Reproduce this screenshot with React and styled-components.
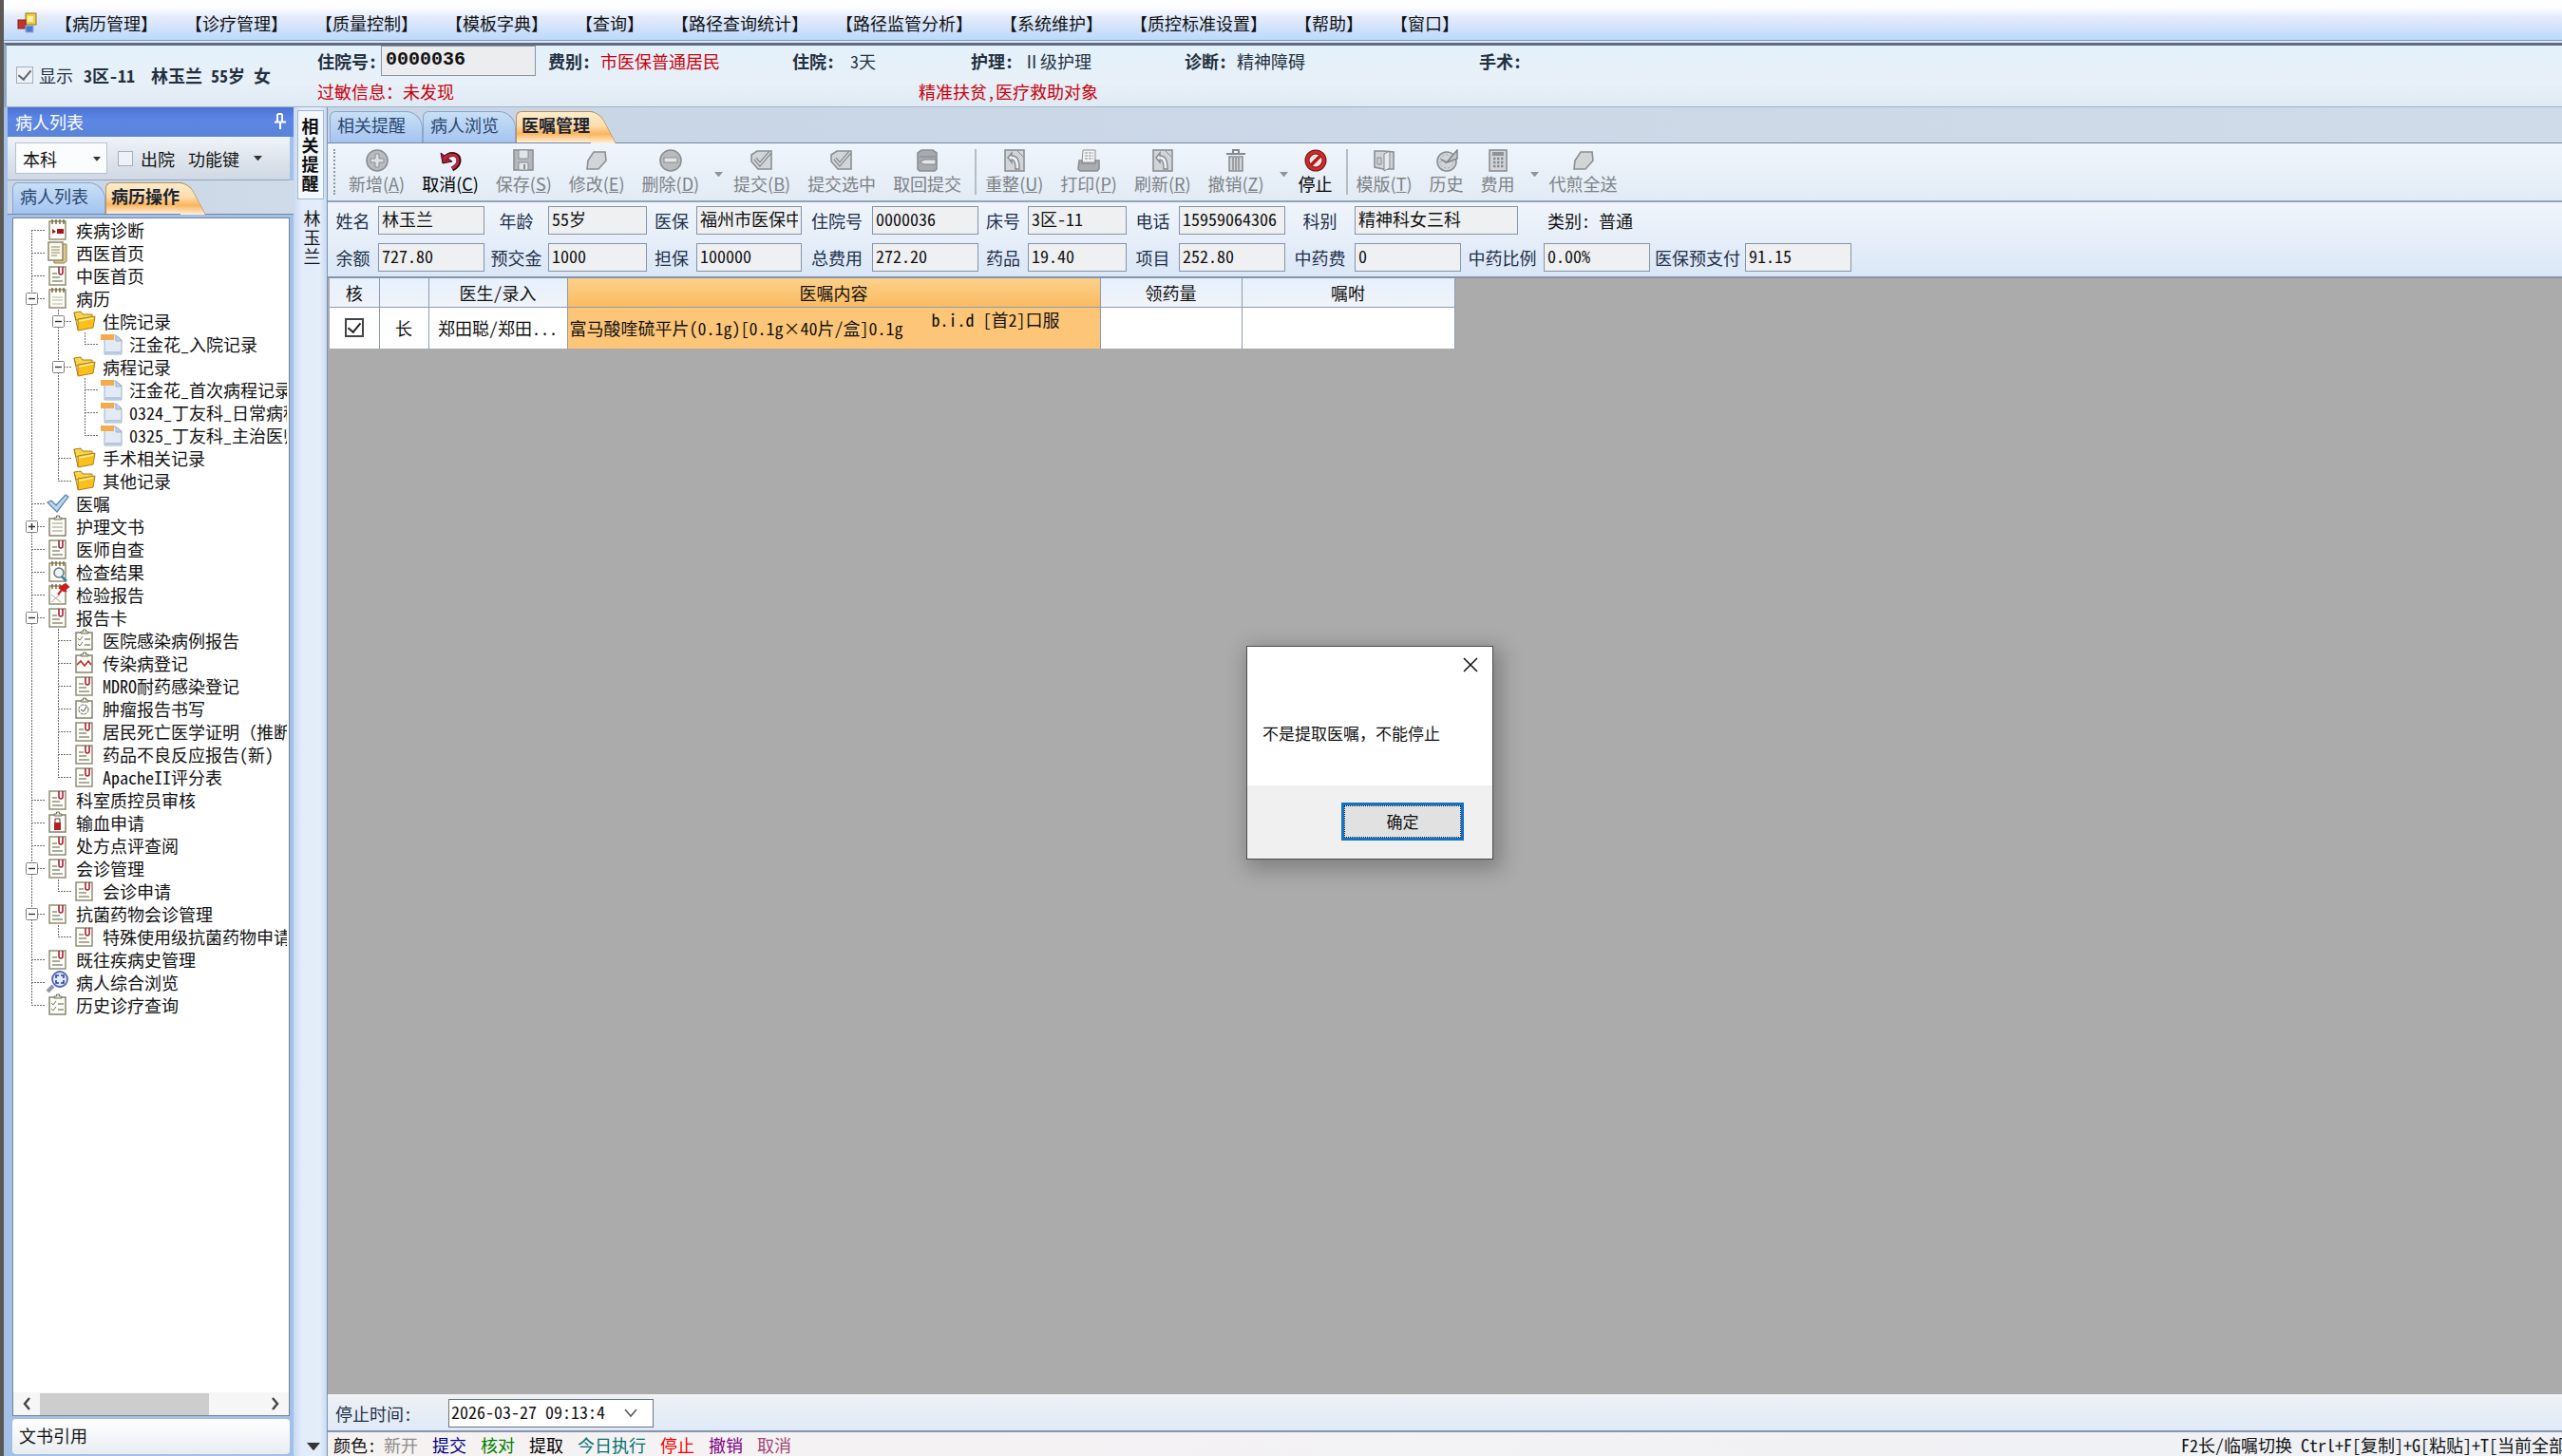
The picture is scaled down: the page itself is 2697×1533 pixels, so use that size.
import React, { useState } from 'react'
import styled, { createGlobalStyle, css } from 'styled-components'

const menus = ['病历管理', '诊疗管理', '质量控制', '模板字典', '查询', '路径查询统计', '路径监管分析', '系统维护', '质控标准设置', '帮助', '窗口']

const patientInfo = [
  { label: '费别', value: '市医保普通居民', width: 257, alert: true },
  { label: '住院', value: '3天', width: 188, gap: 16 },
  { label: '护理', value: 'Ⅱ级护理', width: 225 },
  { label: '诊断', value: '精神障碍', width: 310 },
  { label: '手术', value: '', width: 120 },
]

// guides: one letter per level
// f first, t middle, l last, | pass through, - expanded, + collapsed
const treeRows = [
  ['f', 'diagnose', '疾病诊断'],
  ['t', 'pages', '西医首页'],
  ['t', 'clip', '中医首页'],
  ['-', 'notebook', '病历'],
  ['|-', 'folder', '住院记录'],
  ['||l', 'doc', '汪金花_入院记录'],
  ['|-', 'folder', '病程记录'],
  ['||t', 'doc', '汪金花_首次病程记录'],
  ['||t', 'doc', '0324_丁友科_日常病程记录'],
  ['||l', 'doc', '0325_丁友科_主治医师查房'],
  ['|t', 'folder', '手术相关记录'],
  ['|l', 'folder', '其他记录'],
  ['t', 'check', '医嘱'],
  ['+', 'board', '护理文书'],
  ['t', 'clip', '医师自查'],
  ['t', 'search', '检查结果'],
  ['t', 'pin', '检验报告'],
  ['-', 'clip', '报告卡'],
  ['|t', 'checklist', '医院感染病例报告'],
  ['|t', 'wave', '传染病登记'],
  ['|t', 'clip', 'MDRO耐药感染登记'],
  ['|t', 'target', '肿瘤报告书写'],
  ['|t', 'clip', '居民死亡医学证明（推断）', true],
  ['|t', 'clip', '药品不良反应报告(新)'],
  ['|l', 'clip', 'ApacheII评分表'],
  ['t', 'clip', '科室质控员审核'],
  ['t', 'blood', '输血申请'],
  ['t', 'clip', '处方点评查阅'],
  ['-', 'clip', '会诊管理'],
  ['|l', 'clip', '会诊申请'],
  ['-', 'clip', '抗菌药物会诊管理'],
  ['|l', 'clip', '特殊使用级抗菌药物申请'],
  ['t', 'clip', '既往疾病史管理'],
  ['t', 'lens', '病人综合浏览'],
  ['l', 'checklist', '历史诊疗查询'],
]

const tools = [
  { icon: 'add', text: '新增', hot: 'A' },
  { icon: 'undo', text: '取消', hot: 'C', on: true },
  { icon: 'save', text: '保存', hot: 'S' },
  { icon: 'edit', text: '修改', hot: 'E' },
  { icon: 'minus', text: '删除', hot: 'D' },
  { type: 'arrow' },
  { icon: 'submit', text: '提交', hot: 'B' },
  { icon: 'submit', text: '提交选中' },
  { icon: 'back', text: '取回提交' },
  { type: 'line' },
  { icon: 'redo', text: '重整', hot: 'U' },
  { icon: 'print', text: '打印', hot: 'P' },
  { icon: 'redo', text: '刷新', hot: 'R' },
  { icon: 'trash', text: '撤销', hot: 'Z' },
  { type: 'arrow' },
  { icon: 'stop', text: '停止', on: true },
  { type: 'line' },
  { icon: 'book', text: '模版', hot: 'T' },
  { icon: 'clock', text: '历史' },
  { icon: 'calc', text: '费用' },
  { type: 'arrow' },
  { icon: 'edit', text: '代煎全送' },
]

const fieldsTop = [
  ['姓名', '林玉兰'],
  ['年龄', '55岁'],
  ['医保', '福州市医保中心'],
  ['住院号', '0000036'],
  ['床号', '3区-11'],
  ['电话', '15959064306'],
  ['科别', '精神科女三科', true],
]

const fieldsBottom = [
  ['余额', '727.80'],
  ['预交金', '1000'],
  ['担保', '100000'],
  ['总费用', '272.20'],
  ['药品', '19.40'],
  ['项目', '252.80'],
  ['中药费', '0'],
  ['中药比例', '0.00%'],
  ['医保预支付', '91.15'],
]

const legend = [
  ['新开', '#8c8c8c'],
  ['提交', '#000080'],
  ['核对', '#008000'],
  ['提取', '#000000'],
  ['今日执行', '#007070'],
  ['停止', '#f00000'],
  ['撤销', '#800080'],
  ['取消', '#a04878'],
]

const Paper = ({ rings, children }) => (
  <>
    <rect x="3" y="3" width="17" height="19" fill="#fffdf8" stroke="#8f8f74" strokeWidth="1.5" />
    {rings && <path d="M6 1v5M10 1v5M14 1v5M18 1v5" stroke="#7c6b3c" strokeWidth="1.5" />}
    {children}
  </>
)

const Board = ({ children }) => (
  <>
    <rect x="3" y="4" width="17" height="18" fill="#fdfdf8" stroke="#85856f" strokeWidth="1.5" />
    <path d="M8 5V3h2.500V1h3v2H16v2z" fill="#e8e8dc" stroke="#6f6f5c" />
    {children}
  </>
)

const treeIcons = {
  diagnose: <Paper rings><path d="M6 11l4 3-4 2z" fill="#a01818" /><rect x="11" y="11" width="7" height="5" fill="#a01818" /></Paper>,
  pages: (
    <>
      <path d="M7 3h14v18l-2 2H8z" fill="#d8c88c" stroke="#8f8050" />
      <rect x="2" y="1" width="15" height="19" fill="#fbf8ee" stroke="#8f8868" strokeWidth="1.5" />
      <path d="M5 6h9M5 9h9M5 12h9M5 15h6" stroke="#8f8868" />
    </>
  ),
  clip: (
    <Paper>
      <path d="M13 3v6a2 2 0 004 0V3" fill="none" stroke="#a8203c" strokeWidth="1.6" />
      <path d="M6 10h5M6 14h8M6 18h11" stroke="#8a927e" strokeWidth="1.3" />
    </Paper>
  ),
  notebook: <Paper rings><path d="M6 11h11M6 14h11M6 18h11" stroke="#b4b8a0" strokeWidth="1.2" /></Paper>,
  folder: (
    <>
      <path d="M1 3l7-1 2 3h10v6H3z" fill="#f7d64c" stroke="#a87c18" />
      <path d="M5 10l18-3-2 12-16 3z" fill="#fbc01c" stroke="#b07c10" />
      <path d="M1 3l4 18" stroke="#a87c18" />
      <path d="M6 12l15-3" stroke="#fff0a0" strokeWidth="1.5" />
    </>
  ),
  doc: (
    <>
      <path d="M5 3h12l6 5v15H5z" fill="#e2eaf6" stroke="#a3afc2" />
      <path d="M17 3v6h6z" fill="#c3d2ea" stroke="#a3afc2" />
      <path d="M6 20h16v2H6z" fill="#b4c6e2" />
      <rect x="1" y="2" width="14" height="6" fill="#f4ab4e" />
    </>
  ),
  check: <path d="M1 11l4-2 5 5L20 3l3 2-12 16z" fill="#bcd8f2" stroke="#5c84ac" strokeWidth="1.3" />,
  board: <Board><path d="M6 9h11M6 13h11M6 17h11" stroke="#9a9a88" strokeWidth="1.2" /></Board>,
  search: (
    <Paper rings>
      <circle cx="13" cy="13" r="5" fill="#eef6fa" stroke="#6b747c" strokeWidth="1.5" />
      <path d="M16 17l5 5" stroke="#2b8ca6" strokeWidth="2.5" />
    </Paper>
  ),
  pin: (
    <Paper rings>
      <path d="M5 12l10 8M5 20l9-8" fill="none" stroke="#a8a8a0" />
      <path d="M14 3l7 6M20 1l3 3-5 4-4-3z" fill="#c82020" stroke="#c82020" strokeWidth="2" />
      <path d="M17 6l-5 6" stroke="#c82020" strokeWidth="2" />
    </Paper>
  ),
  checklist: <Board><path d="M5 10l2 2 3-4M5 16l2 2 3-4" fill="none" stroke="#6f7464" /><path d="M12 11h6M12 17h6" stroke="#8a8f7c" strokeWidth="1.4" /></Board>,
  wave: <Board><path d="M4 14l4-4 4 5 4-5 3 4" fill="none" stroke="#c02828" strokeWidth="1.6" /></Board>,
  target: <Board><circle cx="11" cy="13" r="5" fill="none" stroke="#5c5c5c" strokeDasharray="3 1" /><path d="M8 13l3 2 3-5" fill="none" stroke="#404040" /></Board>,
  blood: <Board><path d="M9 12V8h5v4" fill="none" stroke="#603030" /><rect x="8" y="12" width="7" height="8" fill="#b81c28" /></Board>,
  lens: (
    <>
      <path d="M7 16l-6 6" stroke="#9098a8" strokeWidth="4" />
      <circle cx="14" cy="9" r="8" fill="#e4ecff" stroke="#5264b4" strokeWidth="1.8" />
      <path d="M10 8V5h3M15 5h3v3M18 10v3h-3M13 13h-3v-3" fill="none" stroke="#2c3ca4" strokeWidth="1.6" />
    </>
  ),
}

const grey = { fill: '#d2d5d8', stroke: '#8b8f93', strokeWidth: 1.6 }

const toolIcons = {
  add: (
    <>
      <circle cx="12" cy="12" r="11" {...grey} fill="#b9bcbf" />
      <path d="M10 5h4v5h5v4h-5v5h-4v-5H5v-4h5z" fill="#dfe1e3" stroke="#8b8f93" />
    </>
  ),
  undo: (
    <>
      <path d="M7 9c5-6 14-4 14 3 0 4-3 7-7 9" fill="none" stroke="#3d0c14" strokeWidth="5" />
      <path d="M2 4l2 11 10-2z" fill="#a81c34" stroke="#3d0c14" />
      <path d="M6 10c5-6 14-5 14 2 0 4-3 7-6 8" fill="none" stroke="#c02840" strokeWidth="3" />
    </>
  ),
  save: (
    <>
      <rect x="2" y="1" width="20" height="21" {...grey} fill="#b4b8bc" />
      <path d="M7 1h10v9H7zM7 14h10v8H7z" fill="#e3e6e8" stroke="#8b8f93" />
      <path d="M13 16v5" stroke="#8b8f93" strokeWidth="2" />
    </>
  ),
  edit: <path d="M9 3h12l1 9-8 9H2l1-9z" {...grey} />,
  minus: (
    <>
      <circle cx="12" cy="12" r="11" {...grey} fill="#b9bcbf" />
      <rect x="5" y="9" width="14" height="5" fill="#e3e5e7" stroke="#8b8f93" />
    </>
  ),
  submit: (
    <>
      <path d="M1 6l6-4h15v19H8L1 13z" {...grey} />
      <path d="M5 10l5 6L21 3" fill="none" stroke="#84888c" strokeWidth="4" />
      <path d="M5 10l5 6L21 3" fill="none" stroke="#d5d8db" strokeWidth="1.5" />
    </>
  ),
  back: (
    <>
      <path d="M6 1h12l4 3v17l-2 2H4l-2-2V4z" {...grey} fill="#a7abaf" />
      <path d="M4 8h17M9 11h12v5H9l-5-2z" fill="#e3e6e8" stroke="#82868a" />
    </>
  ),
  redo: (
    <>
      <rect x="2" y="1" width="20" height="22" {...grey} />
      <path d="M5 9l4-5v3c6 0 8 4 8 14h-4c0-7-1-10-4-10v3z" fill="#eef0f2" stroke="#85898d" strokeWidth="1.4" />
      <path d="M15 2l6 6" stroke="#85898d" />
    </>
  ),
  print: (
    <>
      <path d="M6 1h13v13H5z" fill="#f2f4f5" stroke="#8b8f93" />
      <path d="M8 4h9M8 7h9M8 10h9" stroke="#8b8f93" strokeDasharray="3 1" />
      <path d="M2 12h3v3h14v-3h4v9l-2 2H3l-2-2z" {...grey} fill="#a9adb1" />
    </>
  ),
  trash: (
    <>
      <path d="M9 4V1h6v3M2 5h20" fill="none" stroke="#85898d" strokeWidth="2" />
      <path d="M5 8h14v15H5z" {...grey} />
      <path d="M9 9v13M12 9v13M15 9v13" stroke="#85898d" strokeWidth="1.4" />
    </>
  ),
  stop: (
    <>
      <circle cx="12" cy="12" r="9" fill="#f6e4e2" stroke="#7c1414" strokeWidth="5" />
      <path d="M6 18L18 6" stroke="#b01c1c" strokeWidth="3.5" />
      <circle cx="12" cy="12" r="9" fill="none" stroke="#cc2c2c" strokeWidth="3" />
    </>
  ),
  book: (
    <>
      <path d="M2 2h9l11 1v18H11l-9-2z" {...grey} />
      <path d="M12 5l6-3v18l-6 3z" fill="#e8eaec" stroke="#85898d" />
      <path d="M5 9h4v7H5z" fill="none" stroke="#85898d" />
    </>
  ),
  clock: (
    <>
      <circle cx="12" cy="13" r="10" {...grey} />
      <circle cx="12" cy="13" r="7" fill="none" stroke="#a4a8ac" strokeDasharray="2 2" />
      <path d="M12 14L23 1v9z" fill="#c4c8cc" stroke="#7d8185" strokeWidth="1.4" />
      <path d="M6 11l6 3" stroke="#7d8185" strokeWidth="1.6" />
    </>
  ),
  calc: (
    <>
      <rect x="3" y="1" width="18" height="22" {...grey} />
      <rect x="6" y="3" width="12" height="4" fill="#8f9397" />
      <path d="M7 10h12M7 14h12M7 18h12" stroke="#83878b" strokeWidth="2.4" strokeDasharray="2.4 1.6" />
    </>
  ),
}

const GlobalStyle = createGlobalStyle`
  * { box-sizing: border-box; }
  body {
    margin: 0;
    overflow: hidden;
  }
  body, button, input, select, table {
    font-family: 'Noto Sans CJK SC', sans-serif;
    font-size: 18px;
    line-height: 24px;
    color: #111;
  }
  body, input, select, table { font-feature-settings: 'hwid'; }
  button {
    padding: 0;
    border: 0;
    background: none;
    white-space: nowrap;
  }
`

const Page = styled.div`
  position: relative;
  height: 100vh;
  display: flex;
  flex-direction: column;
  border-left: 4px solid #5c5954;
  background: #dfe9f6;
  white-space: nowrap;
`

const MenuBar = styled.nav`
  height: 43px;
  display: flex;
  align-items: center;
  padding: 6px 0 0 14px;
  background: linear-gradient(#fff 0, #fdfdff 8px, #e4ecfb 18px, #bcd8fb 100%);
  border-bottom: 1px solid #7f97b8;
`

const MenuItem = styled.button`
  padding: 0 14px 0 15px;
  height: 32px;
`

const AppIcon = styled.svg`
  margin-right: 3px;
`

const Header = styled.header`
  display: flex;
  height: 68px;
  margin-top: 2px;
  border-top: 3px solid #5b6b80;
  border-left: 3px solid #8fa8c8;
  border-bottom: 1px solid #9fb2c8;
  background: linear-gradient(#e4f1fb, #e8f0f8 60%, #dfeaf3);
`

const Summary = styled.div`
  width: 327px;
  padding: 0 0 3px 10px;
  display: flex;
  align-items: center;
  font-weight: bold;
  color: #23303e;

  label {
    margin: 0 11px 0 6px;
    font-weight: normal;
  }
  span { margin-right: 17px; }
`

const Check = styled.input`
  appearance: none;
  flex: none;
  width: ${p => p.$size || 18}px;
  height: ${p => p.$size || 18}px;
  margin: 0;
  background: ${p => (p.$plain ? '#fff' : '#eef2f6')};
  border: ${p => (p.$plain ? '2px solid #444' : '1px solid #a3afbd')};
  display: grid;
  place-items: center;

  &:checked::before {
    content: '';
    width: 6px;
    height: 11px;
    margin-bottom: 3px;
    border: solid ${p => (p.$plain ? '#222' : '#5c646c')};
    border-width: 0 2px 2px 0;
    transform: rotate(40deg);
  }
`

const InfoRows = styled.div`
  flex: 1;
  overflow: hidden;
`

const InfoRow = styled.div`
  display: flex;
  align-items: center;
  height: 32px;
  color: ${p => (p.$alert ? '#c8000c' : '#23303e')};
`

const InfoItem = styled.div`
  width: ${p => p.$width}px;
  display: flex;
  align-items: center;
  gap: ${p => p.$gap || 10}px;

  span { color: ${p => (p.$alert ? '#c8000c' : '#23303e')}; }
`

const IdInput = styled.input`
  width: 163px;
  height: 32px;
  padding: 0 4px 4px;
  border: 1px solid #8795a6;
  background: #ecedee;
  font: bold 20px 'Liberation Mono', monospace;
`

const Body = styled.div`
  flex: 1;
  min-height: 0;
  display: flex;
`

const Side = styled.aside`
  width: 305px;
  padding: 0 0 2px 4px;
  display: flex;
  flex-direction: column;
  background: #a3c0e8;
`

const SideTitle = styled.div`
  height: 31px;
  display: flex;
  align-items: center;
  justify-content: space-between;
  padding: 0 8px 2px;
  color: #fff;
  background: linear-gradient(#4a72d4, #5c86e4 40%, #5a84d8);
`

const SideTools = styled.div`
  height: 46px;
  display: flex;
  align-items: center;
  padding-left: 8px;
  margin-right: 4px;
  background: linear-gradient(#eff3f8, #cfd8e3);
  border-bottom: 1px solid #93a5bd;

  label { margin: 0 14px 0 8px; }
`

const DeptBox = styled.div`
  position: relative;
  width: 97px;
  margin-right: 11px;

  svg {
    position: absolute;
    right: 7px;
    top: 15px;
    pointer-events: none;
  }
`

const Select = styled.select`
  appearance: none;
  width: 100%;
  height: 33px;
  padding: 0 7px;
  border: 1px solid #b4c2d4;
  border-radius: 0;
  background: #fafcfe;
`

const FnButton = styled.button`
  display: flex;
  align-items: center;
  gap: 15px;
`

const TabBar = styled.div`
  display: flex;
  flex: none;
  align-items: flex-end;
  height: ${p => p.$height}px;
  padding-left: ${p => p.$pad}px;
  background: linear-gradient(90deg, #c8d5e5, #cfdbe8);
  border-bottom: 1px solid #7688a2;
`

const tabShape = css`
  border: 1px solid #8ba6cc;
  border-bottom: 0;
  background: linear-gradient(#c8dff6, #a4c4f0);
`

const Tab = styled.button`
  position: relative;
  height: 33px;
  padding: 0 17px 6px 7px;
  border-radius: 6px 18px 0 0;
  color: #2c4870;
  ${tabShape}

  ${p =>
    p.$active &&
    css`
      z-index: 1;
      padding: 0 3px 6px 5px;
      border-radius: 6px 0 0 0;
      border-right: 0;
      border-color: #b98f58;
      font-weight: bold;
      color: #1c2430;
      background: linear-gradient(#fdeccb, #fbdcab 45%, #fcb45c 70%, #fff0dc);

      &::after {
        content: '';
        position: absolute;
        z-index: -1;
        top: -1px;
        right: -16px;
        width: 26px;
        height: 33px;
        border: solid #b98f58;
        border-width: 1px 1px 0 0;
        border-radius: 0 10px 0 0;
        background: linear-gradient(#fdeccb, #fbdcab 45%, #fcb45c 70%, #fff0dc);
        transform: skewX(28deg);
      }
    `}

  span {
    position: relative;
    z-index: 1;
  }
`

const TreeBox = styled.div`
  flex: 1;
  min-height: 0;
  margin: 3px 4px 0 5px;
  display: flex;
  flex-direction: column;
  justify-content: space-between;
  background: #fff;
  border: 1px solid #72829a;
`

const Tree = styled.ul`
  margin: 0 2px 0 0;
  padding: 0 0 0 5px;
  list-style: none;
  overflow: hidden;
`

const TreeRow = styled.li`
  display: flex;
  align-items: center;
  height: 24px;

  svg { flex: none; }
`

const TreeText = styled.button`
  margin-left: 5px;
  font-feature-settings: ${p => (p.$full ? 'normal' : "'hwid'")};
`

const ScrollRow = styled.div`
  display: flex;
  align-items: center;
  height: 24px;
  padding: 0 8px;
  gap: 8px;
  background: #f6f6f6;
`

const ScrollThumb = styled.div`
  width: 178px;
  height: 23px;
  margin-right: auto;
  background: #cdcdcd;
`

const DocRef = styled.button`
  height: 37px;
  margin: 3px 4px 0 5px;
  padding: 0 7px 4px;
  text-align: left;
  border-radius: 4px;
  background: linear-gradient(#fff, #e9edf2);
`

const VerticalBar = styled.div`
  width: 36px;
  display: flex;
  flex-direction: column;
  align-items: center;
  padding-top: 3px;
  background: linear-gradient(90deg, #c8d9f1, #e1ebf9 8px, #e4edfa 28px, #cad9ef);
  border-right: 1px solid #7a92b6;

  svg { margin: auto 0 6px 6px; }
`

const VerticalTab = styled.button`
  width: 28px;
  padding: ${p => (p.$active ? '5px 4px 7px' : '8px 4px')};
  margin-left: ${p => (p.$active ? 0 : 4)}px;
  border: 1px solid ${p => (p.$active ? '#a3b6d2' : 'transparent')};
  background: ${p => (p.$active ? '#f3f8fd' : 'none')};
  font-weight: ${p => (p.$active ? 'bold' : 'normal')};
  line-height: 20px;
  white-space: normal;
  word-break: break-all;
`

const Main = styled.main`
  flex: 1;
  min-width: 0;
  display: flex;
  flex-direction: column;
`

const Toolbar = styled.div`
  display: flex;
  flex: none;
  height: 62px;
  padding: 6px 0 0 6px;
  background: linear-gradient(#eff5fb, #e2ebf5);
  border-bottom: 2px solid #93a3b9;
`

const Grip = styled.div`
  width: 7px;
  height: 48px;
  border-left: 2px dotted #8a98ac;
`

const ToolButton = styled.button`
  display: flex;
  flex-direction: column;
  align-items: center;
  padding: 0 9px;
  color: ${p => (p.$on ? '#000' : '#7d8186')};
`

const ToolLine = styled.div`
  width: 2px;
  height: 48px;
  margin: 0 0 0 5px;
  background: #b4bec9;
`

const ToolArrow = styled.button`
  width: 18px;
  display: flex;
  justify-content: flex-end;
  padding: 24px 2px 0 0;
`

const Form = styled.div`
  flex: none;
  height: 80px;
  display: grid;
  align-content: center;
  align-items: center;
  grid-template-columns: 53px 112px 67px 104px 52px 111px 74px 112px 52px 104px 55px 112px 73px 112px 87px 112px 100px 112px;
  grid-template-rows: 30px 30px;
  row-gap: 9px;
  padding-bottom: 2px;
  border-bottom: 2px solid #8494ac;
  background: linear-gradient(#f0f5fb, #dbe7f7);

  label {
    text-align: center;
    color: #1e2f48;
  }
`

const FieldInput = styled.input`
  width: ${p => (p.$wide ? '172px' : '100%')};
  height: 30px;
  min-width: 0;
  padding: 0 3px 4px;
  border: 1px solid #8594a8;
  border-radius: 0;
  background: #eef0f1;
`

const Kind = styled.div`
  grid-column: 16;
  padding-left: 4px;
`

const Orders = styled.div`
  flex: 1;
  min-height: 0;
  padding-left: 2px;
  background: #ababab;
`

const OrderTable = styled.table`
  table-layout: fixed;
  width: 1184px;
  border-collapse: collapse;
  background: #fff;
`

const Th = styled.th`
  width: ${p => p.$width}px;
  height: 30px;
  padding: 0;
  font-weight: normal;
  border: solid #8d9cb2;
  border-width: 0 1px 1px 0;
  background: ${p => (p.$hot ? 'linear-gradient(#fdd08a, #fabb62)' : 'linear-gradient(#e6f0fc, #f0f3f9)')};
`

const Td = styled.td`
  height: 44px;
  padding: ${p => (p.$center ? 0 : '0 0 0 2px')};
  text-align: ${p => (p.$center ? 'center' : 'left')};
  border-right: 1px solid #8d9cb2;
  background: ${p => (p.$hot ? '#fdc577' : '#fff')};
  overflow: hidden;

  ${Check} { margin: 0 auto; }
  sup {
    margin-left: 30px;
    font-size: inherit;
    line-height: 0;
    vertical-align: 9px;
  }
`

const StopBar = styled.div`
  flex: none;
  display: flex;
  align-items: center;
  height: 40px;
  padding-left: 8px;
  border-top: 2px solid #f4f4f4;
  border-bottom: 2px solid #8494ac;
  background: linear-gradient(#eef1f5, #dfe9f7);
  color: #1e2f48;

  label { width: 119px; }
`

const DateBox = styled.div`
  display: flex;
  align-items: center;
  width: 216px;
  height: 30px;
  border: 1px solid #6c7480;
  background: #fff;

  input {
    width: 178px;
    padding: 0 2px 4px;
    border: 0;
    background: none;
  }
`

const StatusBar = styled.footer`
  flex: none;
  display: flex;
  align-items: center;
  height: 25px;
  padding: 1px 0 0 6px;
  gap: 8px;
  background: linear-gradient(90deg, #f6f2f2, #eff1f5);
`

const Legend = styled.div`
  display: flex;
  gap: 15px;
`

const LegendItem = styled.span`
  color: ${p => p.$color};
`

const Hotkeys = styled.span`
  margin-left: auto;
  width: 401px;
  overflow: hidden;
`

const Dialog = styled.div`
  position: absolute;
  z-index: 5;
  left: 1308px;
  top: 680px;
  width: 260px;
  display: flex;
  flex-direction: column;
  border: 1px solid #4c4c4c;
  background: #fff;
  box-shadow: 4px 6px 20px 4px rgba(0, 0, 0, 0.25);
  font-size: 17px;
  font-feature-settings: normal;
`

const CloseButton = styled.button`
  align-self: flex-end;
  display: grid;
  padding: 11px 15px;
`

const Message = styled.p`
  margin: 41px 0 43px;
  padding-left: 16px;
`

const DialogFoot = styled.div`
  display: flex;
  justify-content: flex-end;
  padding: 18px 30px 19px;
  background: #f0f0f0;
`

const OkButton = styled.button`
  width: 129px;
  height: 40px;
  border: 3px solid #1072c4;
  background: #e2e1e2;
  outline: 1px dotted #222;
  outline-offset: -4px;
  font-size: 17px;
`

const Guide = ({ kind }) => (
  <svg width="28" height="24" viewBox="0 0 28 24">
    <g stroke="#6c6c6c" strokeDasharray="2 1">
      {kind !== 'f' && <path d="M14.500 0V12" />}
      {kind !== 'l' && <path d="M14.500 12V24" />}
      {kind !== '|' && <path d="M14 12.500H30" />}
    </g>
    {(kind === '-' || kind === '+') && (
      <>
        <rect x="8.500" y="6.500" width="12" height="12" rx="1" fill="#fff" stroke="#808080" />
        <path d={kind === '+' ? 'M11 12.500h7M14.500 9v7' : 'M11 12.500h7'} stroke="#333" strokeWidth="1.4" />
      </>
    )}
  </svg>
)

const Icon = ({ set, name, width = 24 }) => (
  <svg width={width} height="24" viewBox="0 0 24 24" aria-hidden="true">
    {set[name]}
  </svg>
)

const Down = ({ color = '#333', size = 10 }) => (
  <svg width={size} height={size * 0.6} viewBox="0 0 10 6" aria-hidden="true">
    <path d="M0 0h10L5 6z" fill={color} />
  </svg>
)

const Field = ({ data }) => {
  const [label, value, wide] = data
  return (
    <>
      <label htmlFor={label}>{label}</label>
      <FieldInput id={label} defaultValue={value} $wide={wide} readOnly />
    </>
  )
}

const Sidebar = () => (
  <Side>
    <SideTitle>
      病人列表
      <svg width="12" height="17" viewBox="0 0 12 17">
        <path d="M3 1v8M3 1h5M8 1v8M0 9.500h12M6 10v7" fill="none" stroke="#fff" strokeWidth="2" />
      </svg>
    </SideTitle>
    <SideTools>
      <DeptBox>
        <Select aria-label="科室">
          <option>本科</option>
        </Select>
        <Down size={8} />
      </DeptBox>
      <Check type="checkbox" id="left" $size={16} />
      <label htmlFor="left">出院</label>
      <FnButton>
        功能键 <Down size={9} />
      </FnButton>
    </SideTools>
    <TabBar $height={36} $pad={5}>
      <Tab>病人列表</Tab>
      <Tab $active><span>病历操作</span></Tab>
    </TabBar>
    <TreeBox>
      <Tree>
        {treeRows.map(([guides, icon, text, full], i) => (
          <TreeRow key={i}>
            {guides.split('').map((kind, n) => (
              <Guide key={n} kind={kind} />
            ))}
            <Icon set={treeIcons} name={icon} width={28} />
            <TreeText $full={full}>{text}</TreeText>
          </TreeRow>
        ))}
      </Tree>
      <ScrollRow>
        <svg width="12" height="14" viewBox="0 0 12 14"><path d="M9 1L4 7l5 6" fill="none" stroke="#444" strokeWidth="2.4" /></svg>
        <ScrollThumb />
        <svg width="12" height="14" viewBox="0 0 12 14"><path d="M3 1l5 6-5 6" fill="none" stroke="#444" strokeWidth="2.4" /></svg>
      </ScrollRow>
    </TreeBox>
    <DocRef>文书引用</DocRef>
  </Side>
)

const ToolItem = ({ tool }) => {
  if (tool.type === 'line') return <ToolLine />
  if (tool.type === 'arrow') {
    return (
      <ToolArrow aria-label="更多">
        <Down color="#8f959c" size={9} />
      </ToolArrow>
    )
  }
  return (
    <ToolButton $on={tool.on}>
      <Icon set={toolIcons} name={tool.icon} />
      <span>
        {tool.text}
        {tool.hot && <>(<u>{tool.hot}</u>)</>}
      </span>
    </ToolButton>
  )
}

const App = () => {
  const [open, setOpen] = useState(true)

  return (
    <>
      <GlobalStyle />
      <Page>
        <MenuBar>
          <AppIcon width="22" height="22" viewBox="0 0 22 22">
            <rect x="9" y="1" width="11" height="12" fill="#f4cf3c" stroke="#8c7420" />
            <rect x="1" y="8" width="8" height="9" fill="#c83030" stroke="#802020" />
            <rect x="9" y="14" width="8" height="7" fill="#4c7cd0" stroke="#8cb0e4" />
            <rect x="11" y="4" width="6" height="6" fill="#fff2a8" />
          </AppIcon>
          {menus.map(m => (
            <MenuItem key={m}>【{m}】</MenuItem>
          ))}
        </MenuBar>

        <Header>
          <Summary>
            <Check type="checkbox" id="show" defaultChecked />
            <label htmlFor="show">显示</label>
            <span>3区-11</span>
            <span>林玉兰 55岁 女</span>
          </Summary>
          <InfoRows>
            <InfoRow>
              <InfoItem $width={243} $gap={4}>
                <label htmlFor="pid"><b>住院号:</b></label>
                <IdInput id="pid" defaultValue="0000036" readOnly />
              </InfoItem>
              {patientInfo.map(item => (
                <InfoItem key={item.label} $width={item.width} $gap={item.gap} $alert={item.alert}>
                  <b>{item.label}:</b>
                  <span>{item.value}</span>
                </InfoItem>
              ))}
            </InfoRow>
            <InfoRow $alert>
              <InfoItem $width={633} $alert><span>过敏信息：未发现</span></InfoItem>
              精准扶贫,医疗救助对象
            </InfoRow>
          </InfoRows>
        </Header>

        <Body>
          <Sidebar />
          <VerticalBar>
            <VerticalTab $active>相关提醒</VerticalTab>
            <VerticalTab>林玉兰</VerticalTab>
            <Down size={14} />
          </VerticalBar>

          <Main>
            <TabBar $height={38} $pad={2}>
              <Tab>相关提醒</Tab>
              <Tab>病人浏览</Tab>
              <Tab $active><span>医嘱管理</span></Tab>
            </TabBar>
            <Toolbar>
              <Grip />
              {tools.map((t, i) => (
                <ToolItem key={i} tool={t} />
              ))}
            </Toolbar>
            <Form>
              {fieldsTop.map(f => <Field key={f[0]} data={f} />)}
              <Kind>类别: 普通</Kind>
              <span />
              <span />
              {fieldsBottom.map(f => <Field key={f[0]} data={f} />)}
            </Form>
            <Orders>
              <OrderTable>
                <thead>
                  <tr>
                    <Th $width={52}>核</Th>
                    <Th $width={52} />
                    <Th $width={146}>医生/录入</Th>
                    <Th $width={561} $hot>医嘱内容</Th>
                    <Th $width={149}>领药量</Th>
                    <Th $width={224}>嘱咐</Th>
                  </tr>
                </thead>
                <tbody>
                  <tr>
                    <Td $center><Check type="checkbox" aria-label="核" $size={20} $plain defaultChecked /></Td>
                    <Td $center>长</Td>
                    <Td $center>郑田聪/郑田...</Td>
                    <Td $hot>
                      富马酸喹硫平片(0.1g)[0.1g×40片/盒]0.1g
                      <sup>b.i.d [首2]口服</sup>
                    </Td>
                    <Td />
                    <Td />
                  </tr>
                </tbody>
              </OrderTable>
            </Orders>
            <StopBar>
              <label htmlFor="stopTime">停止时间:</label>
              <DateBox>
                <input id="stopTime" defaultValue="2026-03-27 09:13:4" />
                <svg width="26" height="10" viewBox="0 0 26 10"><path d="M7 1l6 7 6-7" fill="none" stroke="#555" strokeWidth="1.5" /></svg>
              </DateBox>
            </StopBar>
            <StatusBar>
              <span>颜色:</span>
              <Legend>
                {legend.map(([text, color]) => (
                  <LegendItem key={text} $color={color}>{text}</LegendItem>
                ))}
              </Legend>
              <Hotkeys>F2长/临嘱切换 Ctrl+F[复制]+G[粘贴]+T[当前全部]</Hotkeys>
            </StatusBar>
          </Main>
        </Body>

        {open && (
          <Dialog role="dialog">
            <CloseButton aria-label="关闭" onClick={() => setOpen(false)}>
              <svg width="16" height="16" viewBox="0 0 16 16"><path d="M1 1l14 14M15 1L1 15" stroke="#111" strokeWidth="1.5" /></svg>
            </CloseButton>
            <Message>不是提取医嘱，不能停止</Message>
            <DialogFoot>
              <OkButton onClick={() => setOpen(false)}>确定</OkButton>
            </DialogFoot>
          </Dialog>
        )}
      </Page>
    </>
  )
}

export default App
